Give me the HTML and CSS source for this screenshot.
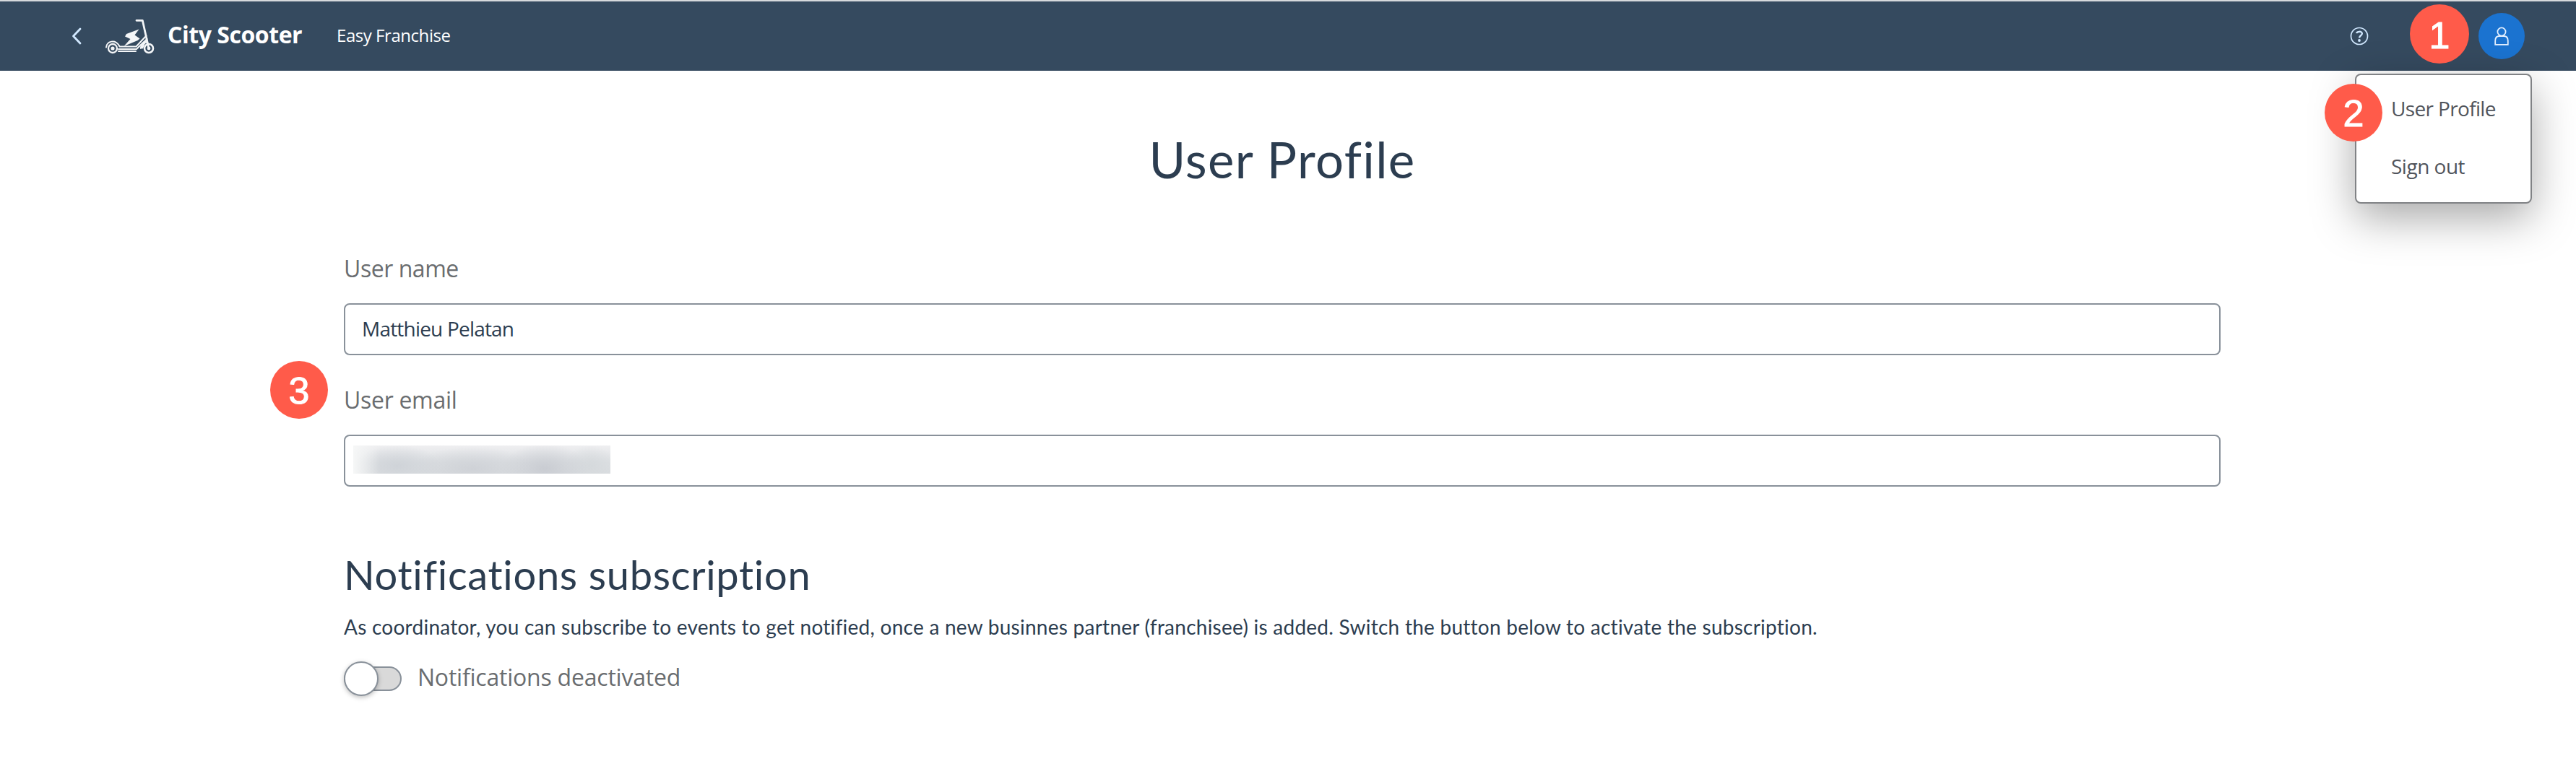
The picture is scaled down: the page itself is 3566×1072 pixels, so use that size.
FILE: index.html
```html
<!DOCTYPE html>
<html lang="en">
<head>
<meta charset="utf-8">
<title>User Profile</title>
<link rel="stylesheet" href="styles.css">
</head>
<body>
<header class="shellbar">
  <svg class="back" viewBox="0 0 14 24"><path d="M12 2 2.5 12 12 22"/></svg>
  <svg class="logo" viewBox="0 0 70 50">
    <g fill="none" stroke="#f4f6f8" stroke-linejoin="round" stroke-linecap="round">
      <path stroke-width="2.8" d="M44 3.3h8.3L60.5 40"/>
      <path stroke-width="2" d="M2 40.500C3 32 14 29 19.500 37.500L20.500 39.500H43.500L57.500 24.500"/>
      <path stroke-width="2" d="M19 43H44L50 37L58.500 29M19 46H43"/>
      <path stroke-width="2" d="M50 42C50 35 55 32 59 32"/>
      <circle cx="11" cy="42" r="6" stroke-width="2.300"/>
      <circle cx="61" cy="42" r="6" stroke-width="2.600"/>
    </g>
    <path fill="none" stroke="#f4f6f8" stroke-width="3" d="M51.500 42 54 35.500 58 31.500 59 35"/>
    <circle cx="11" cy="42" r="2.600" fill="#f4f6f8"/>
    <circle cx="61" cy="42" r="2.400" fill="#f4f6f8"/>
    <path fill="#f4f6f8" d="M47.500 15.500 30 22 28 25.500 35.500 29 26.500 39 45.500 31 48.500 28.500 41.500 23.500Z"/>
  </svg>
  <span class="brand">City Scooter</span>
  <span class="product">Easy Franchise</span>
  <div class="actions">
    <svg class="help" viewBox="0 0 26 26"><circle cx="13" cy="13" r="11.500"/><path d="M9.200 9.200C9.500 6.300 16.800 5.500 16.900 9.600 16.900 12.300 13 12.200 13 15.500"/><circle class="dot" cx="13" cy="19" r="1.900"/></svg>
    <div class="avatar"><svg viewBox="0 0 20 26"><circle cx="10" cy="7" r="5.600"/><path d="M1.200 24.800V19.500C1.200 15.500 3.500 13 7 13H13C16.500 13 18.800 15.500 18.800 19.500V24.800Z"/></svg></div>
  </div>
</header>
<nav class="menu">
  <a class="menu-profile">User Profile</a>
  <a class="menu-signout">Sign out</a>
</nav>
<main class="page">
  <h1>User Profile</h1>
  <div class="field">
    <label class="label-name">User name</label>
    <div class="input">Matthieu Pelatan</div>
  </div>
  <div class="field">
    <label class="label-email">User email</label>
    <div class="input input-email"><div class="redacted"></div></div>
  </div>
  <h2>Notifications subscription</h2>
  <p>As coordinator, you can subscribe to events to get notified, once a new businnes partner (franchisee) is added. Switch the button below to activate the subscription.</p>
  <div class="switch-row">
    <div class="switch"><div class="knob"></div></div>
    <span>Notifications deactivated</span>
  </div>
</main>
<div class="step step-1">1</div>
<div class="step step-2">2</div>
<div class="step step-3">3</div>
</body>
</html>
```
FILE: styles.css
```css
* { box-sizing: border-box; }
body {
  margin: 0;
  position: relative;
  min-height: 1072px;
  background: #fff;
  color: #2c3d50;
  font-family: "Open Sans", sans-serif;
}
.shellbar {
  height: 98px;
  border-top: 2px solid #d6d9dc;
  background: #354a5f;
  display: flex;
  align-items: center;
  padding: 0 71px 0 99px;
  color: #fff;
  white-space: nowrap;
}
.back {
  width: 14px; height: 24px; margin-right: 32px;
  fill: none; stroke: #d1e8ff; stroke-width: 2.8;
  stroke-linecap: round; stroke-linejoin: round;
}
.logo { width: 70px; height: 50px; margin-right: 17px; }
.brand {
  width: 234px; padding-bottom: 4px;
  font-size: 32px; font-weight: 700; line-height: 42px; letter-spacing: -0.45px;
}
.product { padding-bottom: 2px; font-size: 24px; line-height: 34px; letter-spacing: -0.45px; }
.actions { margin-left: auto; display: flex; align-items: center; }
.help {
  width: 26px; height: 26px; margin-right: 152px;
  fill: none; stroke: #d1e8ff; stroke-width: 1.7;
}
.help path { stroke-width: 2.3; }
.help .dot { fill: #d1e8ff; stroke: none; }
.avatar {
  width: 64px; height: 64px; border-radius: 50%;
  background: #1b73d0;
  display: flex; align-items: center; justify-content: center;
}
.avatar svg { width: 20px; height: 26px; fill: none; stroke: #e4f0ff; stroke-width: 1.8; }

.menu {
  position: absolute; left: 3260px; top: 102px;
  width: 245px; height: 180px;
  padding: 6px 0 0 48px;
  border: 2px solid #808285; border-radius: 8px;
  background: #fff;
  box-shadow: 0 20px 60px rgba(0, 0, 0, .34);
  color: #51555c;
  font-size: 28px; line-height: 80px;
}
.menu a { display: block; white-space: nowrap; }
.menu-profile { letter-spacing: -0.65px; }
.menu-signout { letter-spacing: -0.5px; }

.page { width: 2598px; margin: 83px 0 0 476px; }
h1 {
  margin: 0 0 91px;
  text-align: center;
  font: 400 69px/80px Lato, sans-serif;
  letter-spacing: 1.35px;
  font-variant-ligatures: none;
}
.field { margin-bottom: 42px; }
.field label { display: block; margin-bottom: 28px; font-size: 32px; line-height: 40px; color: #6a6d70; }
.label-name { letter-spacing: -0.45px; }
.label-email { letter-spacing: -0.3px; }
.input {
  height: 72px;
  padding: 0 23px;
  border: 2px solid #89919a; border-radius: 8px;
  font-size: 28px; line-height: 67px; letter-spacing: -0.8px;
}
.input-email { padding: 13px 11px; }
.redacted {
  width: 356px; height: 39px;
  background:
    linear-gradient(90deg, #f6f7f7 0, rgba(246, 247, 247, 0) 36px),
    radial-gradient(ellipse 60px 28px at 62px 28px, #cfd3d8, rgba(207, 211, 216, 0)),
    radial-gradient(ellipse 85px 30px at 165px 32px, #cfd2d7, rgba(207, 210, 215, 0)),
    radial-gradient(ellipse 60px 34px at 265px 32px, #c9ccd2, rgba(201, 204, 210, 0)),
    radial-gradient(ellipse 35px 28px at 328px 28px, #d5d9dc, rgba(213, 217, 220, 0)),
    linear-gradient(180deg, #efeff1, #dcdfe2 60%, #dadde0);
}
h2 {
  margin: 88px 0 20px;
  font: 400 56px/68px Lato, sans-serif;
  letter-spacing: .7px;
  font-variant-ligatures: none;
}
p {
  margin: 0 0 30px;
  font: 400 28px/36px Lato, sans-serif;
  letter-spacing: .25px;
  white-space: nowrap;
  font-variant-ligatures: none;
}
.switch-row { display: flex; align-items: center; gap: 22px; height: 48px; }
.switch-row span { padding-bottom: 4px; font-size: 32px; line-height: 40px; letter-spacing: -0.22px; color: #6a6d70; }
.switch {
  width: 80px; height: 34px;
  display: flex; align-items: center;
  border: 2px solid #89919a; border-radius: 17px;
  background: #d9d9d9;
}
.knob {
  flex: none;
  width: 48px; height: 48px; margin-left: -2px;
  border: 2px solid #89919a; border-radius: 50%;
  background: #fff;
  box-shadow: 0 2px 6px rgba(0, 0, 0, .25);
}
.step {
  position: absolute;
  width: 80px; height: 80px; border-radius: 50%;
  background: #ff5b4a;
  color: #fff;
  font: 400 52px/83px "Liberation Sans", sans-serif;
  -webkit-text-stroke: 1px #fff;
  text-align: center;
}
.step-1 { left: 3336px; top: 6px; width: 82px; height: 82px; line-height: 86px; }
.step-2 { left: 3218px; top: 116px; }
.step-3 { left: 374px; top: 500px; }
```
